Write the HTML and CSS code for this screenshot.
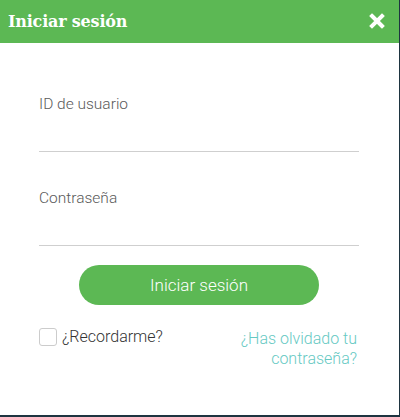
FILE: index.html
```html
<!DOCTYPE html>
<html lang="es">
<head>
<meta charset="utf-8">
<link rel="stylesheet" href="styles.css">
</head>
<body>
<div class="dialog">
  <div class="header">
    <span class="title">Iniciar sesión</span>
    <svg class="close" width="16" height="16" viewBox="0 0 16 16"><path d="M3 3 L13 13 M13 3 L3 13" stroke="#fff" stroke-width="4" stroke-linecap="square"/></svg>
  </div>
  <div class="body">
    <div class="field first"><span class="label">ID de usuario</span></div>
    <div class="field second"><span class="label">Contraseña</span></div>
    <div class="btn-row"><button class="btn">Iniciar sesión</button></div>
    <div class="bottom">
      <label class="remember"><span class="box"></span>¿Recordarme?</label>
      <a class="forgot">¿Has olvidado tu<br>contraseña?</a>
    </div>
  </div>
</div>
</body>
</html>
```
FILE: styles.css
```css
html, body { margin: 0; padding: 0; }
body { background: #1e3440; width: 400px; height: 417px; font-family: Roboto, "Liberation Sans", sans-serif; }
.dialog { width: 399px; height: 415px; background: #fff; }
.header { height: 43px; background: #5cb854; display: flex; align-items: center; justify-content: space-between; padding: 0 14px 0 8px; box-sizing: border-box; }
.title { font-family: "DejaVu Serif", serif; font-weight: bold; font-size: 16px; color: #fff; letter-spacing: -0.2px; }
.close { display: block; margin-top: -2px; }
.body { padding: 51px 40px 0 39px; }
.field { box-sizing: border-box; border-bottom: 1px solid #cfcfcf; }
.field.first { height: 58px; }
.field.second { height: 94px; padding-top: 36px; }
.label { font-size: 15.5px; font-weight: 300; color: #5a5a5a; line-height: 20px; display: block; }
.btn-row { display: flex; justify-content: center; padding-top: 19px; }
.btn { width: 240px; height: 40px; border: none; border-radius: 20px; background: #5cb854; color: #fff; font-family: Roboto, sans-serif; font-size: 17px; font-weight: 300; padding: 0; }
.bottom { display: flex; justify-content: space-between; align-items: flex-start; padding-top: 21px; }
.remember { display: flex; align-items: center; font-size: 16px; font-weight: 300; color: #333; line-height: 20px; margin-top: 1px; }
.box { width: 18px; height: 18px; border: 1px solid #ccc; border-radius: 3px; margin-right: 5px; box-sizing: border-box; }
.forgot { text-align: right; color: #66c9c3; font-size: 16px; font-weight: 300; line-height: 20px; margin-top: 3px; margin-right: 2px; }
```
